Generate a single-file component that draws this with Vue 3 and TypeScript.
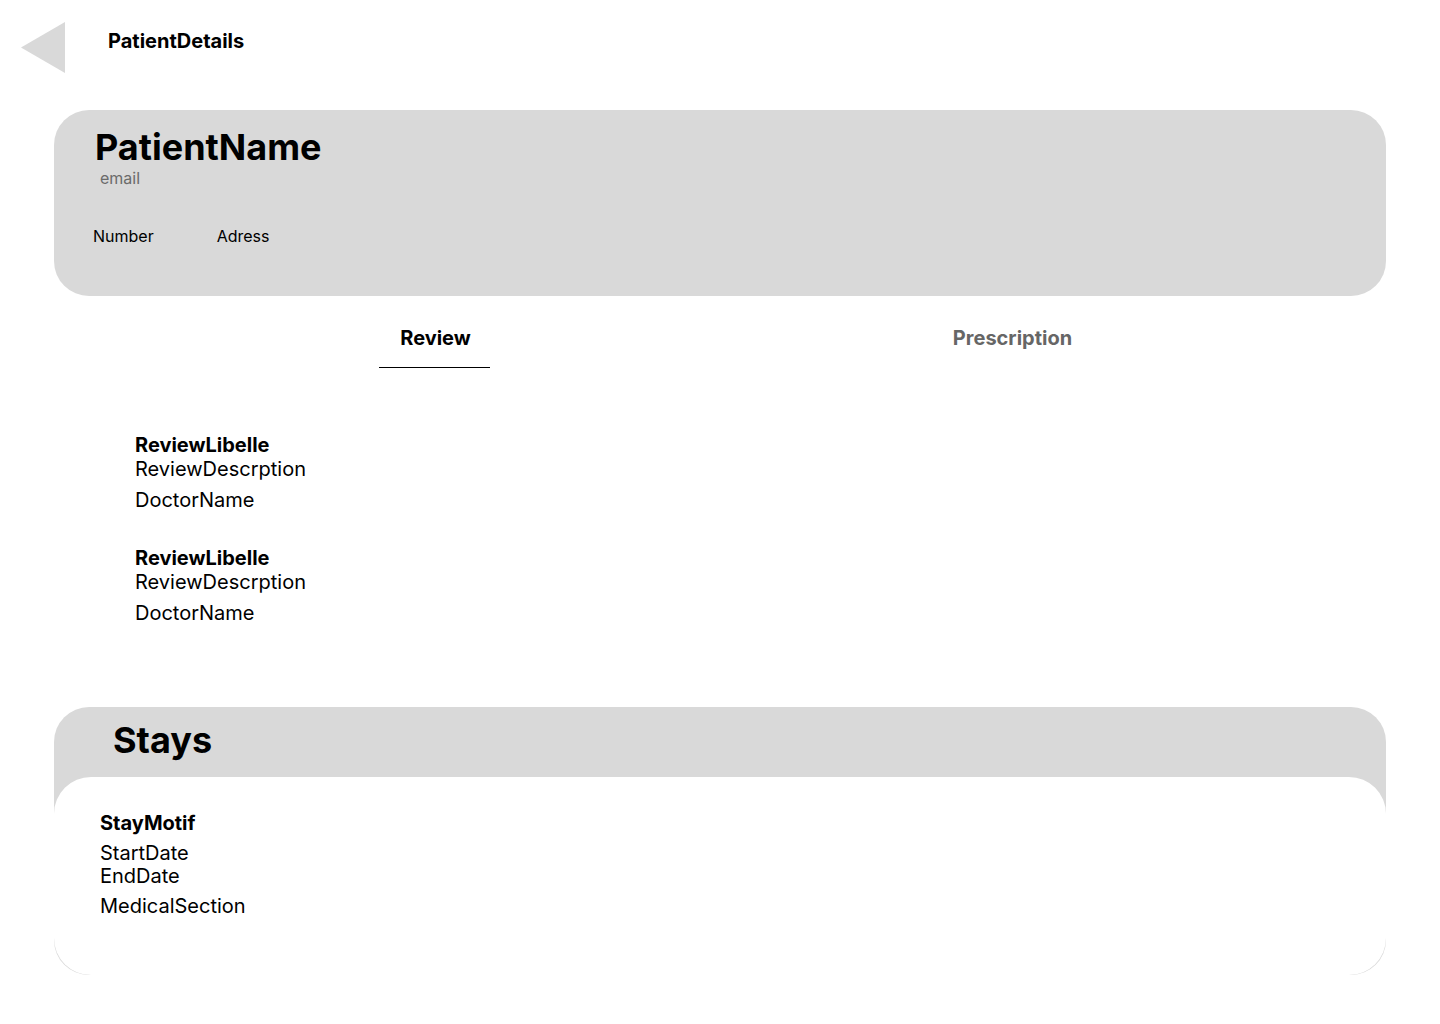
<script setup lang="ts">
import { ref } from 'vue'

interface Review {
  id: number
  label: string
  description: string
  doctor: string
}

interface Stay {
  id: number
  motif: string
  start: string
  end: string
  section: string
}

type Tab = 'Review' | 'Prescription'

const tabs: Tab[] = ['Review', 'Prescription']
const activeTab = ref<Tab>('Review')

const reviews: Review[] = [
  { id: 1, label: 'ReviewLibelle', description: 'ReviewDescrption', doctor: 'DoctorName' },
  { id: 2, label: 'ReviewLibelle', description: 'ReviewDescrption', doctor: 'DoctorName' },
]

const stays: Stay[] = [
  { id: 1, motif: 'StayMotif', start: 'StartDate', end: 'EndDate', section: 'MedicalSection' },
]
</script>

<template>
  <div class="page">
    <header class="top-bar">
      <button class="back" type="button" aria-label="Back">
        <svg width="44" height="51" viewBox="0 0 44 51" aria-hidden="true">
          <path d="M0 25.5 44 0v51z" fill="#d9d9d9" />
        </svg>
      </button>
      <h1 class="page-title">PatientDetails</h1>
    </header>

    <main class="content">
      <section class="patient">
        <h2 class="heading patient-name">PatientName</h2>
        <p class="email">email</p>
        <div class="contact">
          <span>Number</span>
          <span>Adress</span>
        </div>
      </section>

      <div class="tabs" role="tablist">
        <button
          v-for="tab in tabs"
          :key="tab"
          class="tab"
          :class="{ active: tab === activeTab }"
          type="button"
          role="tab"
          :aria-selected="tab === activeTab"
          @click="activeTab = tab"
        >
          {{ tab }}
        </button>
      </div>

      <div class="reviews" role="tabpanel">
        <article v-for="review in reviews" :key="review.id">
          <h3 class="label">{{ review.label }}</h3>
          <p>{{ review.description }}</p>
          <p class="doctor">{{ review.doctor }}</p>
        </article>
      </div>

      <section class="stays">
        <h2 class="heading stays-title">Stays</h2>
        <div class="stays-body">
          <article v-for="stay in stays" :key="stay.id">
            <h3 class="label">{{ stay.motif }}</h3>
            <div class="dates">
              <p>{{ stay.start }}</p>
              <p>{{ stay.end }}</p>
            </div>
            <p>{{ stay.section }}</p>
          </article>
        </div>
      </section>
    </main>
  </div>
</template>

<style>
body {
  margin: 0;
  background: #fff;
}
</style>

<style scoped>
.page {
  font-family: Inter, 'Liberation Sans', sans-serif;
  font-size: 20px;
  line-height: 24px;
  color: #000;
  padding-bottom: 49px;
}

h1,
h2,
h3,
p {
  margin: 0;
  font-size: inherit;
}

button {
  border: 0;
  background: none;
  font: inherit;
  cursor: pointer;
}

.top-bar {
  display: flex;
  align-items: flex-start;
  gap: 43px;
  padding: 22px 21px 37px;
}

.back {
  display: flex;
  padding: 0;
}

.page-title {
  padding-top: 7px;
  font-weight: 700;
}

.content {
  margin: 0 54px;
}

.heading {
  font-size: 36px;
  line-height: 44px;
  font-weight: 700;
}

.patient {
  padding: 15px 39px 50px;
  border-radius: 35px;
  background: #d9d9d9;
  font-size: 16px;
  line-height: 19px;
}

.patient-name {
  padding-left: 2px;
}

.email {
  padding-left: 7px;
  color: #6b6b6b;
}

.contact {
  display: flex;
  gap: 63px;
  margin-top: 39px;
}

.tabs {
  display: grid;
  grid-template-columns: 1fr 1fr;
  justify-items: center;
  padding: 30px 86px 0 92px;
}

.tab {
  padding: 0 19px 17px 21px;
  border-bottom: 1px solid transparent;
  font-weight: 700;
  color: #666;
}

.tab.active {
  border-bottom-color: #000;
  color: #000;
}

.reviews {
  display: flex;
  flex-direction: column;
  gap: 34px;
  padding: 65px 81px 82px;
}

.label {
  font-weight: 700;
}

.doctor {
  margin-top: 7px;
}

.stays {
  border-radius: 35px;
  background: #d9d9d9;
}

.stays-title {
  padding: 11px 59px 15px;
}

.stays-body {
  padding: 34px 46px 57px;
  border-radius: 37px;
  background: #fff;
}

.dates {
  margin: 7px 0 6px;
  line-height: 23px;
}
</style>
